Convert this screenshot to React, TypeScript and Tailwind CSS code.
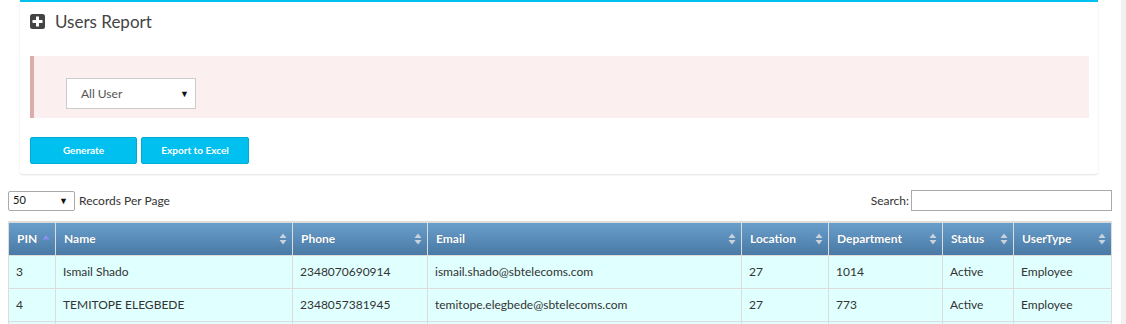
import React from "react";

const font = { fontFamily: "Lato, 'Open Sans', sans-serif" };

const columns = [
  { label: "PIN", w: "w-[47px]", sort: "asc" },
  { label: "Name", w: "w-[237px]", sort: "both" },
  { label: "Phone", w: "w-[135px]", sort: "both" },
  { label: "Email", w: "w-[314px]", sort: "both" },
  { label: "Location", w: "w-[87px]", sort: "both" },
  { label: "Department", w: "w-[114px]", sort: "both" },
  { label: "Status", w: "w-[71px]", sort: "both" },
  { label: "UserType", w: "", sort: "both" },
];

const rows = [
  ["3", "Ismail Shado", "2348070690914", "ismail.shado@sbtelecoms.com", "27", "1014", "Active", "Employee"],
  ["4", "TEMITOPE ELEGBEDE", "2348057381945", "temitope.elegbede@sbtelecoms.com", "27", "773", "Active", "Employee"],
  ["", "", "", "", "", "", "", ""],
];

const SortIcon = ({ mode }: { mode: string }) =>
  mode === "asc" ? (
    <svg width="8" height="12" viewBox="0 0 8 12">
      <path d="M4 2 L7.5 6.5 L0.5 6.5 Z" fill="#8d8ff0" />
    </svg>
  ) : (
    <svg width="8" height="12" viewBox="0 0 8 12">
      <path d="M4 0.5 L7.5 5 L0.5 5 Z" fill="#c9d3dd" />
      <path d="M4 11.5 L7.5 7 L0.5 7 Z" fill="#c9d3dd" />
    </svg>
  );

export default function App() {
  return (
    <div className="relative w-[1126px] h-[324px] overflow-hidden bg-white text-[#333]" style={font}>
      <div className="absolute right-0 top-0 h-full w-[5px] bg-[#f1f1f1]" />
      <div className="pl-[20px] w-[1098px]">
        <div className="border-t-2 border-[#00c0ef] bg-white rounded-b-[3px] shadow-[0_1px_2px_rgba(0,0,0,0.12)] px-[10px] pb-[10px]">
          <div className="flex items-center h-[38px] gap-[10px]">
            <svg width="15" height="15" viewBox="0 0 15 15">
              <rect x="0" y="0" width="15" height="15" rx="2.5" fill="#444" />
              <rect x="6" y="2.5" width="3" height="10" fill="#fff" />
              <rect x="2.5" y="6" width="10" height="3" fill="#fff" />
            </svg>
            <span className="text-[17px] text-[#444] leading-none">Users Report</span>
          </div>
          <div className="mt-[16px] h-[62px] w-[1059px] bg-[#fbf0ef] border-l-4 border-[#dcacab] flex items-start pt-[22px] pl-[32px]">
            <div className="h-[31px] w-[130px] bg-white border border-[#ccc] flex items-center justify-between pl-[14px] pr-[6px] text-[12px] text-[#555]">
              <span>All User</span>
              <span className="text-[9px] text-[#111]">▼</span>
            </div>
          </div>
          <div className="flex gap-[4px] mt-[19px]">
            <button className="h-[27px] w-[107px] bg-[#00c0ef] border border-[#00acd6] rounded-[2px] text-white text-[10px] font-bold">
              Generate
            </button>
            <button className="h-[27px] w-[108px] bg-[#00c0ef] border border-[#00acd6] rounded-[2px] text-white text-[10px] font-bold">
              Export to Excel
            </button>
          </div>
        </div>
      </div>

      <div className="mt-[16px] pl-[8px] w-[1112px] flex items-center justify-between">
        <div className="flex items-center gap-[4px]">
          <div className="h-[20px] w-[67px] border border-[#aaa] rounded-[2px] bg-white flex items-center justify-between pl-[4px] pr-[6px] text-[11px] text-[#111]">
            <span>50</span>
            <span className="text-[9px]">▼</span>
          </div>
          <span className="text-[12px] text-[#333]">Records Per Page</span>
        </div>
        <div className="flex items-center gap-[2px]">
          <span className="text-[12px] text-[#333]">Search:</span>
          <div className="h-[21px] w-[201px] border border-[#aaa] bg-white" />
        </div>
      </div>

      <div className="pl-[8px] mt-[10px]">
        <table className="w-[1104px] border-collapse table-fixed text-[12px] border-t-2 border-[#dcdcdc]">
          <thead>
            <tr className="h-[33px] bg-gradient-to-b from-[#6a9fcc] to-[#4a7aa6]">
              {columns.map((c) => (
                <th
                  key={c.label}
                  className={`${c.w} border border-[#dcdcdc] border-y-0 text-left text-white font-bold text-[12px] pl-[8px] pr-[5px]`}
                >
                  <div className="flex items-center justify-between">
                    <span className="[text-shadow:0_0_1px_rgba(0,0,0,0.25)]">{c.label}</span>
                    <SortIcon mode={c.sort} />
                  </div>
                </th>
              ))}
            </tr>
          </thead>
          <tbody>
            {rows.map((r, i) => (
              <tr key={i} className="h-[33px] bg-[#e0ffff]">
                {r.map((v, j) => (
                  <td key={j} className="border border-[#dcdcdc] px-[7px] text-[12px] text-[#333]">
                    {v}
                  </td>
                ))}
              </tr>
            ))}
          </tbody>
        </table>
      </div>
    </div>
  );
}
